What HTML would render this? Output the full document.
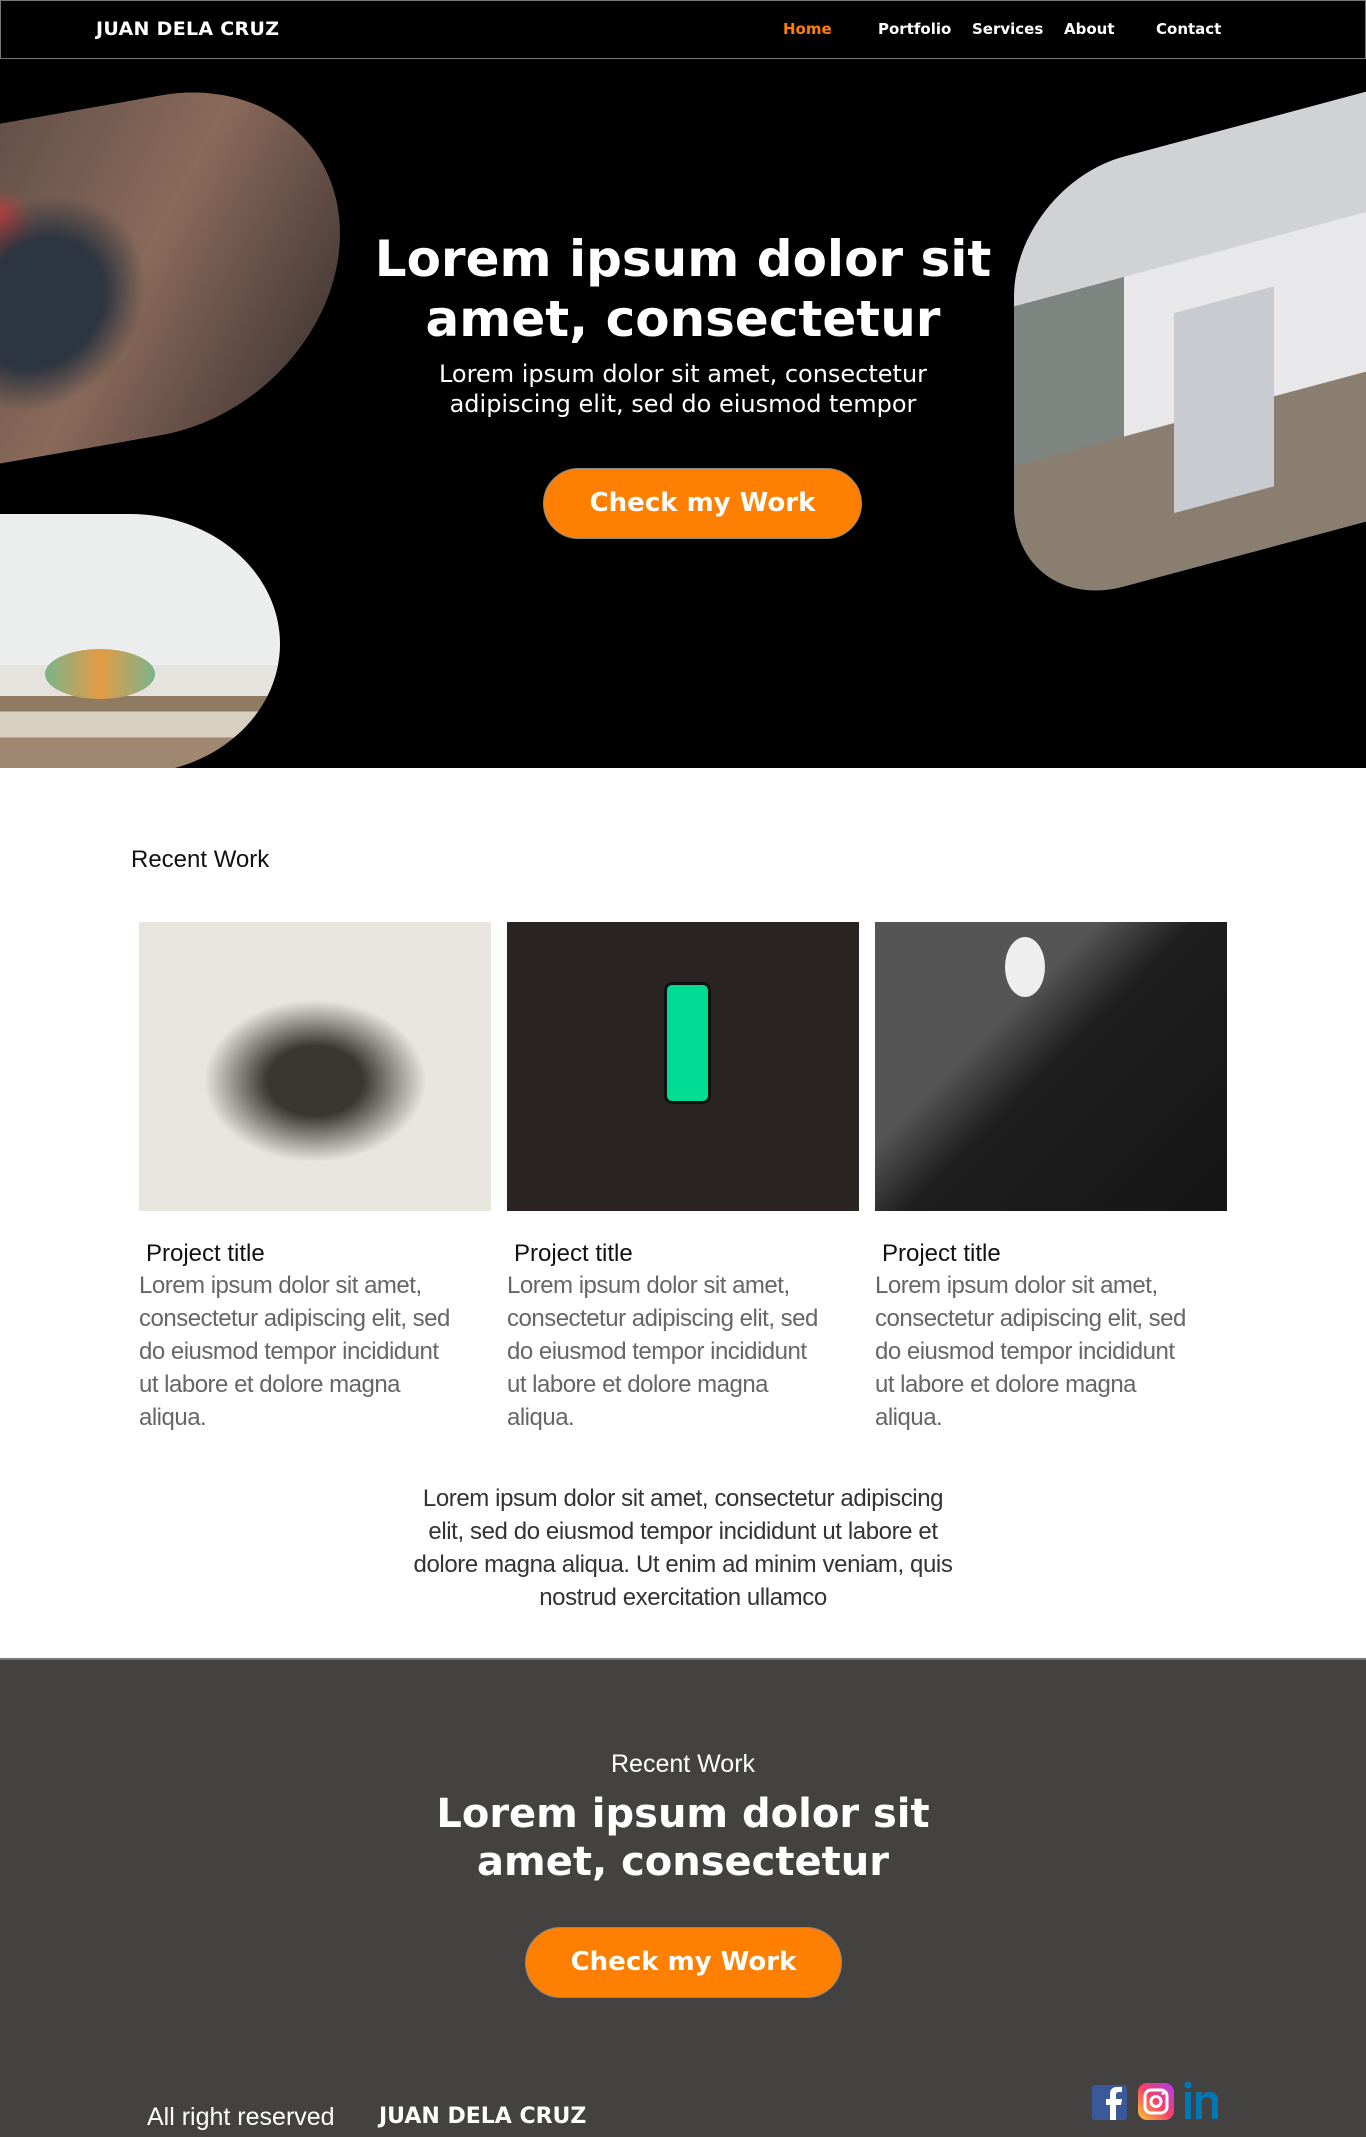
<!DOCTYPE html>
<html><head><meta charset="utf-8"><style>
*{margin:0;padding:0;box-sizing:border-box}
body{width:1366px;height:2137px;background:#fff;font-family:"Liberation Sans",sans-serif;position:relative;overflow:hidden}
.nav{position:absolute;left:0;top:0;width:1366px;height:59px;background:#000;border:1px solid #777}
.nav a{position:absolute;top:19px;color:#fff;font-weight:bold;font-size:15px;text-decoration:none;font-family:"DejaVu Sans",sans-serif}
.logo{position:absolute;left:95px;top:17px;color:#fff;font-weight:bold;font-size:19px;font-family:"DejaVu Sans",sans-serif;letter-spacing:.3px}
.hero{position:absolute;left:0;top:59px;width:1366px;height:709px;background:#000;overflow:hidden}
.blob{position:absolute;overflow:hidden}
h1{position:absolute;left:0;width:1366px;text-align:center;color:#fff;font-family:"DejaVu Sans",sans-serif;font-weight:bold}
.sub{position:absolute;left:0;width:1366px;text-align:center;color:#fff;font-family:"DejaVu Sans",sans-serif;font-size:24px;line-height:30px}
.btn{position:absolute;background:#ff8000;border:1px solid #888;border-radius:36px;color:#fff;font-family:"DejaVu Sans",sans-serif;font-weight:bold;font-size:26px;text-align:center}
.card{position:absolute;top:922px;width:360px}
.card .img{height:289px;width:352px}
.card h3{font-weight:normal;font-size:24px;color:#111;margin:28px 0 0 7px;line-height:30px}
.card p{font-size:24px;line-height:33px;color:#666;letter-spacing:-.5px;white-space:nowrap}
.foot{position:absolute;left:0;top:1658px;width:1366px;height:479px;background:#444241;border-top:2px solid #777}
</style></head><body>
<div class="nav">
<div class="logo">JUAN DELA CRUZ</div>
<a style="left:782px;color:#ff8000">Home</a>
<a style="left:877px">Portfolio</a>
<a style="left:971px">Services</a>
<a style="left:1063px">About</a>
<a style="left:1155px">Contact</a>
</div>
<div class="hero">
<div class="blob" style="left:-60px;top:40px;width:400px;height:340px;border-radius:0 180px 180px 0/0 170px 170px 0;transform:skewY(-10deg);background:radial-gradient(circle at 25% 55%,#2d3540 0 18%,transparent 30%),radial-gradient(circle at 10% 35%,#b04040 0 8%,transparent 14%),linear-gradient(120deg,#5a4a44,#8a6a5a 50%,#3a3030)"></div>
<div class="blob" style="left:-20px;top:455px;width:300px;height:260px;border-radius:0 150px 150px 0/0 130px 130px 0;background:linear-gradient(#eceeed 0 58%,#e6e3de 58% 70%,#8f7a62 70% 76%,#d8cfc0 76% 86%,#a08870 86%)"><div style="position:absolute;left:65px;top:135px;width:110px;height:50px;border-radius:50%;background:linear-gradient(90deg,#7ab48a,#e49a44 50%,#7ab48a)"></div></div>
<div class="blob" style="left:1014px;top:60px;width:500px;height:430px;border-radius:110px;transform:skewY(-15deg);background:linear-gradient(180deg,#d0d2d4 0 28%,transparent 28%),linear-gradient(90deg,#7e847f 0 22%,#e8e8ea 22% 100%);"><div style="position:absolute;left:0;bottom:0;width:100%;height:35%;background:#8a7e70"></div><div style="position:absolute;left:160px;top:170px;width:100px;height:200px;background:#c8ccd0"></div></div>
<h1 style="top:170px;font-size:50px;line-height:60px">Lorem ipsum dolor sit<br>amet, consectetur</h1>
<div class="sub" style="top:300px">Lorem ipsum dolor sit amet, consectetur<br>adipiscing elit, sed do eiusmod tempor</div>
<div class="btn" style="left:543px;top:409px;width:319px;height:71px;line-height:69px">Check my Work</div>
</div>
<div style="position:absolute;left:131px;top:846px;font-size:24px;color:#111">Recent Work</div>
<div class="card" style="left:139px"><div class="img" style="background:radial-gradient(ellipse 45% 40% at 50% 55%,#3a3632 0 30%,transparent 70%),#e8e4de"></div><h3>Project title</h3><p>Lorem ipsum dolor sit amet,<br>consectetur adipiscing elit, sed<br>do eiusmod tempor incididunt<br>ut labore et dolore magna<br>aliqua.</p></div>
<div class="card" style="left:507px"><div class="img" style="background:#2a2523;position:relative"><div style="position:absolute;left:157px;top:60px;width:47px;height:122px;border-radius:8px;background:#00dc94;border:3px solid #111"></div></div><h3>Project title</h3><p>Lorem ipsum dolor sit amet,<br>consectetur adipiscing elit, sed<br>do eiusmod tempor incididunt<br>ut labore et dolore magna<br>aliqua.</p></div>
<div class="card" style="left:875px"><div class="img" style="background:linear-gradient(135deg,#555 0 35%,#1e1e1e 50%,#151515);position:relative"><div style="position:absolute;left:130px;top:15px;width:40px;height:60px;border-radius:50%;background:#eee"></div></div><h3>Project title</h3><p>Lorem ipsum dolor sit amet,<br>consectetur adipiscing elit, sed<br>do eiusmod tempor incididunt<br>ut labore et dolore magna<br>aliqua.</p></div>
<div style="position:absolute;left:283px;top:1482px;width:800px;text-align:center;font-size:24px;line-height:33px;color:#333;letter-spacing:-.4px">Lorem ipsum dolor sit amet, consectetur adipiscing<br>elit, sed do eiusmod tempor incididunt ut labore et<br>dolore magna aliqua. Ut enim ad minim veniam, quis<br>nostrud exercitation ullamco</div>
<div class="foot">
<div style="position:absolute;left:0;top:90px;width:1366px;text-align:center;color:#fff;font-size:25px">Recent Work</div>
<h1 style="top:130px;font-size:40px;line-height:48px">Lorem ipsum dolor sit<br>amet, consectetur</h1>
<div class="btn" style="left:525px;top:267px;width:317px;height:71px;line-height:69px">Check my Work</div>
<div style="position:absolute;left:147px;top:443px;color:#fff;font-size:25px">All right reserved</div>
<div style="position:absolute;left:379px;top:444px;color:#fff;font-size:22px;font-weight:bold;font-family:'DejaVu Sans',sans-serif">JUAN DELA CRUZ</div>
<svg style="position:absolute;left:1092px;top:420px" width="136" height="42" viewBox="0 0 136 42">
<rect x="0" y="5" width="35" height="35" rx="3" fill="#3b5998"/><path d="M24 40V25h5l1-6h-6v-4c0-2 1-3 3-3h3V7h-5c-5 0-7 3-7 7v5h-4v6h4v15z" fill="#fff"/>
<defs><linearGradient id="ig" x1="0" y1="1" x2="1" y2="0"><stop offset="0" stop-color="#fdc830"/><stop offset=".5" stop-color="#f5406a"/><stop offset="1" stop-color="#b23aee"/></linearGradient></defs>
<rect x="46" y="3" width="36" height="37" rx="9" fill="url(#ig)"/><rect x="53" y="10" width="22" height="23" rx="6" fill="none" stroke="#fff" stroke-width="3"/><circle cx="64" cy="21.5" r="5" fill="none" stroke="#fff" stroke-width="3"/><circle cx="71" cy="13.5" r="1.5" fill="#fff"/>
<circle cx="96" cy="5" r="3.5" fill="#0077b5"/><rect x="93" y="12" width="6" height="27" fill="#0077b5"/><path d="M104 39V12h6v4c2-3 5-4 8-4 5 0 8 3 8 9v18h-6V22c0-3-2-5-5-5s-5 2-5 5v17z" fill="#0077b5"/>
</svg>
</div>
</body></html>
